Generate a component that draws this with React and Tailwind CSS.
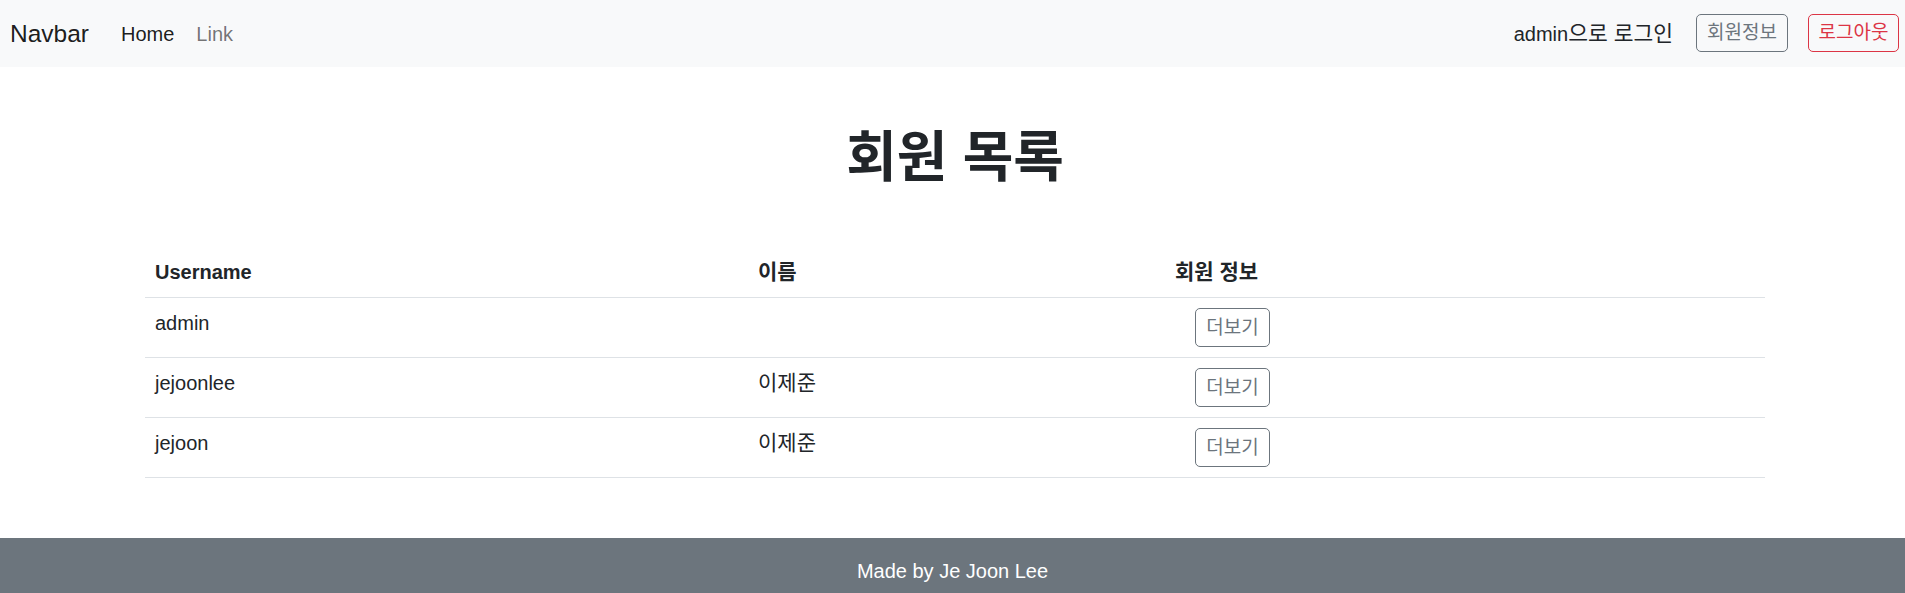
const members = [
  { username: "admin", name: "" },
  { username: "jejoonlee", name: "이제준" },
  { username: "jejoon", name: "이제준" },
];

export default function App() {
  return (
    <div className="bg-white text-[#212529] font-['Liberation_Sans','Noto_Sans_CJK_KR',sans-serif]">
      {/* Navbar */}
      <nav className="h-[67px] bg-[#f8f9fa] flex items-center justify-between pl-[10px] pr-[6px]">
        <div className="flex items-center">
          <a className="text-[24.5px] leading-[36px] text-black/90">Navbar</a>
          <ul className="flex items-center ml-[32px] gap-[22px] text-[20px] leading-[30px]">
            <li className="text-black/90">Home</li>
            <li className="text-black/55">Link</li>
          </ul>
        </div>
        <div className="flex items-center">
          <span className="text-[20px] leading-[30px] text-[#212529]">
            admin<span className="text-[21.5px]">으로 로그인</span>
          </span>
          <button className="ml-[23px] w-[92px] h-[38px] mb-[2px] flex items-center justify-center border border-[#6c757d] text-[#6c757d] rounded-[5px] text-[19px] leading-[26px]">
            회원정보
          </button>
          <button className="ml-[20px] w-[91px] h-[38px] mb-[2px] flex items-center justify-center border border-[#dc3545] text-[#dc3545] rounded-[5px] text-[19px] leading-[26px]">
            로그아웃
          </button>
        </div>
      </nav>

      <div className="pl-[5px]">
        <h1 className="mt-[60px] text-center text-[55px] leading-[60px] font-bold">회원 목록</h1>

        <table className="mt-[60px] mx-auto w-[1620px] table-fixed">
          <colgroup>
            <col className="w-[603px]" />
            <col className="w-[417px]" />
            <col />
          </colgroup>
          <thead>
            <tr className="border-b border-[#dee2e6]">
              <th className="text-left align-top p-[10px] leading-[30px] font-bold text-[20px]">Username</th>
              <th className="text-left align-top p-[10px] leading-[30px] font-bold text-[21px]">이름</th>
              <th className="text-left align-top p-[10px] leading-[30px] font-bold text-[21px]">회원 정보</th>
            </tr>
          </thead>
          <tbody>
            {members.map((m) => (
              <tr key={m.username} className="border-b border-[#dee2e6]">
                <td className="align-top p-[10px] leading-[30px] text-[20px]">{m.username}</td>
                <td className="align-top p-[10px] leading-[30px] text-[21px]">{m.name}</td>
                <td className="align-top p-[10px]">
                  <button className="ml-[20px] w-[75px] h-[39px] flex items-center justify-center border border-[#6c757d] text-[#6c757d] rounded-[5px] text-[19px] leading-[26px]">
                    더보기
                  </button>
                </td>
              </tr>
            ))}
          </tbody>
        </table>
      </div>

      {/* Footer */}
      <footer className="mt-[60px] h-[55px] bg-[#6c757d] text-white text-center pt-[18px] text-[20px] leading-[30px]">
        Made by Je Joon Lee
      </footer>
    </div>
  );
}
